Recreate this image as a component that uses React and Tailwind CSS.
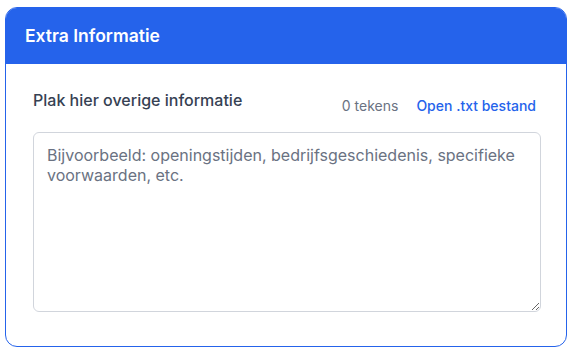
export default function App() {
  return (
    <div className="w-[574px] h-[352px] bg-white pt-[7px] pl-[5px]" style={{ fontFamily: "Inter, 'Noto Sans', sans-serif" }}>
      <div className="w-[562px] h-[340px] rounded-xl border border-[#2563eb] overflow-hidden flex flex-col">
        <div className="h-[56px] bg-[#2563eb] flex items-center px-[19px] shrink-0">
          <h2 className="text-white text-[17.5px] font-semibold">Extra Informatie</h2>
        </div>
        <div className="flex-1 pl-[27px] pr-[25px] pt-[24px] pb-[34px] flex flex-col">
          <div className="flex items-start justify-between mb-[16px]">
            <label className="text-[16px] font-medium text-gray-700 leading-[24px]">Plak hier overige informatie</label>
            <div className="flex items-center gap-[18px] text-[14px] leading-[20px] mt-[8px] mr-[5px]">
              <span className="text-gray-500">0 tekens</span>
              <button className="text-[#2563eb] font-medium">Open .txt bestand</button>
            </div>
          </div>
          <textarea
            className="flex-1 w-full rounded-md border border-gray-300 px-[13px] py-[12px] text-[16px] leading-[20px] text-gray-800 placeholder:text-gray-500 outline-none"
            placeholder="Bijvoorbeeld: openingstijden, bedrijfsgeschiedenis, specifieke voorwaarden, etc."
          />
        </div>
      </div>
    </div>
  );
}
